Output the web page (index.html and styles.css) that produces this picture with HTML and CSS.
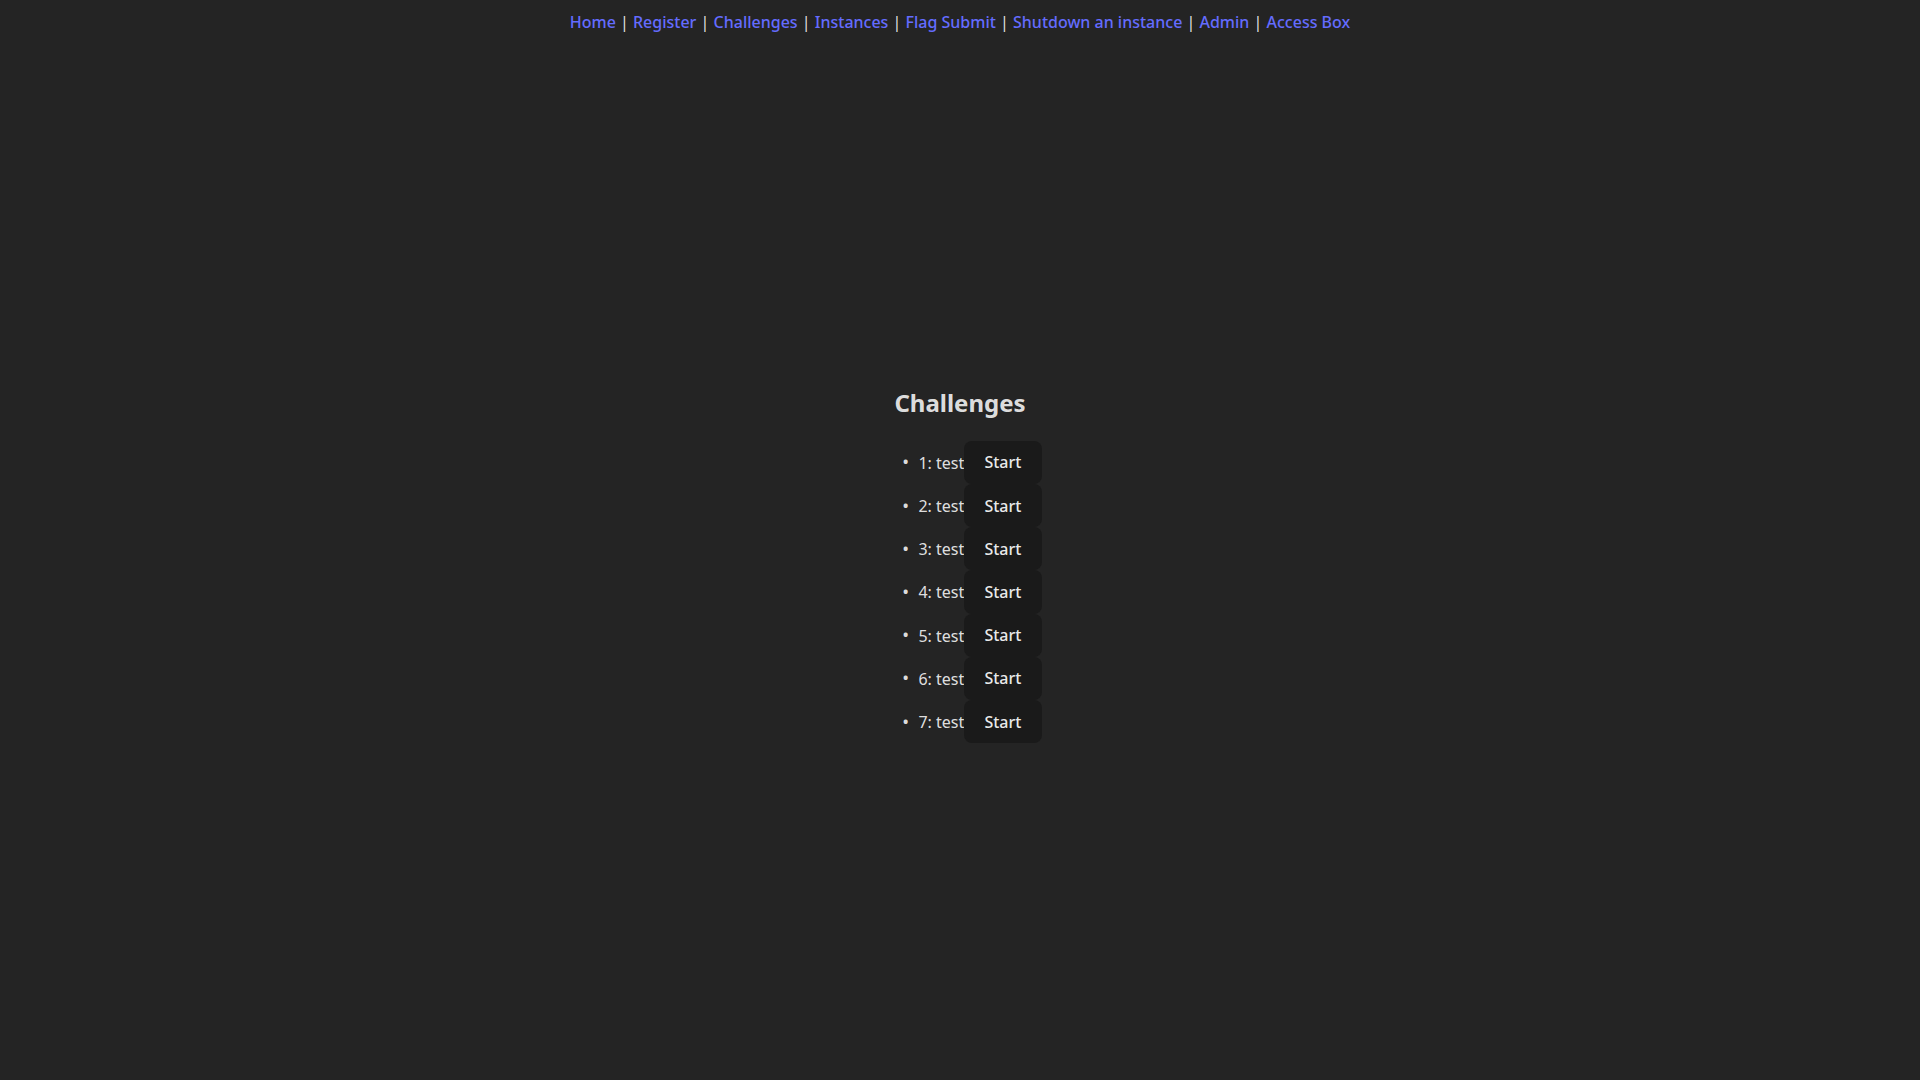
FILE: index.html
```html
<!DOCTYPE html>
<html lang="en">
<head>
<meta charset="utf-8">
<title>Challenges</title>
<link rel="stylesheet" href="styles.css">
</head>
<body>
<nav class="topnav"><a href="#">Home</a> | <a href="#">Register</a> | <a href="#">Challenges</a> | <a href="#">Instances</a> | <a href="#">Flag Submit</a> | <a href="#">Shutdown an instance</a> | <a href="#">Admin</a> | <a href="#">Access Box</a></nav>
<main class="content">
  <h2 class="title">Challenges</h2>
  <ul class="chal-list">
    <li>1: test<button class="btn">Start</button></li>
    <li>2: test<button class="btn">Start</button></li>
    <li>3: test<button class="btn">Start</button></li>
    <li>4: test<button class="btn">Start</button></li>
    <li>5: test<button class="btn">Start</button></li>
    <li>6: test<button class="btn">Start</button></li>
    <li>7: test<button class="btn">Start</button></li>
  </ul>
</main>
</body>
</html>
```
FILE: styles.css
```css
html, body {
  margin: 0;
  padding: 0;
  background-color: #242424;
}
body {
  font-family: "Noto Sans", "DejaVu Sans", sans-serif;
  font-size: 16px;
  line-height: 1.5;
  color: rgba(255, 255, 255, 0.87);
  min-height: 100vh;
  display: flex;
  flex-direction: column;
}
.topnav {
  padding-top: 10px;
  text-align: center;
}
.topnav a {
  color: #646cff;
  text-decoration: none;
  font-weight: 500;
}
.content {
  display: flex;
  flex-direction: column;
  align-items: center;
  padding-top: 331px;
}
.title {
  font-size: 24px;
  font-weight: 700;
  margin: 19.92px 0;
  line-height: 1.5;
}
.chal-list {
  margin: 0 0 16px 0;
  padding-left: 40px;
  text-align: left;
}
.chal-list li::marker {
  content: "\2022\00a0\00a0";
  font-size: 18px;
}
.btn {
  border-radius: 8px;
  border: 1px solid transparent;
  padding: 0.6em 1.2em;
  font-size: 1em;
  font-weight: 500;
  font-family: inherit;
  background-color: #1a1a1a;
  color: rgba(255, 255, 255, 0.92);
  cursor: pointer;
}
```
